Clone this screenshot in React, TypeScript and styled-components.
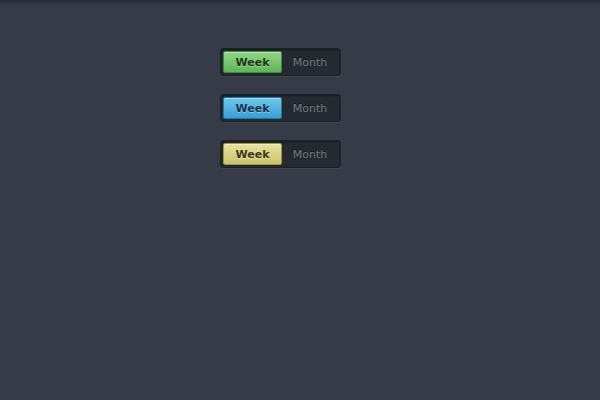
import styled, { createGlobalStyle } from 'styled-components';

const GlobalStyle = createGlobalStyle`
  html, body {
    margin: 0;
    padding: 0;
    background: #353c47;
  }
  body {
    width: 600px;
    height: 400px;
    overflow: hidden;
  }
`;

const Page = styled.div`
  width: 600px;
  height: 400px;
  box-sizing: border-box;
  padding: 48px 0 0 220px;
  display: flex;
  flex-direction: column;
  align-items: flex-start;
  gap: 18px;
  background: linear-gradient(to bottom, #262b32 0px, #2f353f 3px, #353c47 8px, #353c47 100%);
  font-family: "DejaVu Sans", "Liberation Sans", sans-serif;
`;

const Toggle = styled.div`
  display: flex;
  width: 121px;
  height: 28px;
  box-sizing: border-box;
  padding: 2px;
  background: #252a31;
  border: 1px solid #1d2127;
  border-radius: 3px;
  box-shadow: 0 1px 0 rgba(255, 255, 255, 0.06), inset 0 1px 2px rgba(0, 0, 0, 0.35);
`;

const palettes = {
  green: { top: '#8fd783', bottom: '#5db658', border: '#3f8a3c', text: '#23371f' },
  blue: { top: '#6dc9ef', bottom: '#36a0d6', border: '#2478a6', text: '#1b3242' },
  yellow: { top: '#e6e29a', bottom: '#cbc46a', border: '#9a9444', text: '#3a3820' },
};

type Tone = keyof typeof palettes;

const Active = styled.div<{ $tone: Tone }>`
  width: 59px;
  height: 100%;
  box-sizing: border-box;
  display: flex;
  align-items: center;
  justify-content: center;
  border-radius: 2px;
  border: 1px solid ${p => palettes[p.$tone].border};
  background: linear-gradient(to bottom, ${p => palettes[p.$tone].top}, ${p => palettes[p.$tone].bottom});
  box-shadow: inset 0 1px 0 rgba(255, 255, 255, 0.35);
  color: ${p => palettes[p.$tone].text};
  font-size: 11px;
  font-weight: bold;
  text-shadow: 0 1px 0 rgba(255, 255, 255, 0.3);
`;

const Inactive = styled.div`
  flex: 1;
  display: flex;
  align-items: center;
  justify-content: center;
  color: #767c85;
  font-size: 11px;
  text-shadow: 0 -1px 0 rgba(0, 0, 0, 0.5);
`;

const tones: Tone[] = ['green', 'blue', 'yellow'];

export default function App() {
  return (
    <>
      <GlobalStyle />
      <Page>
        {tones.map(t => (
          <Toggle key={t}>
            <Active $tone={t}>Week</Active>
            <Inactive>Month</Inactive>
          </Toggle>
        ))}
      </Page>
    </>
  );
}
